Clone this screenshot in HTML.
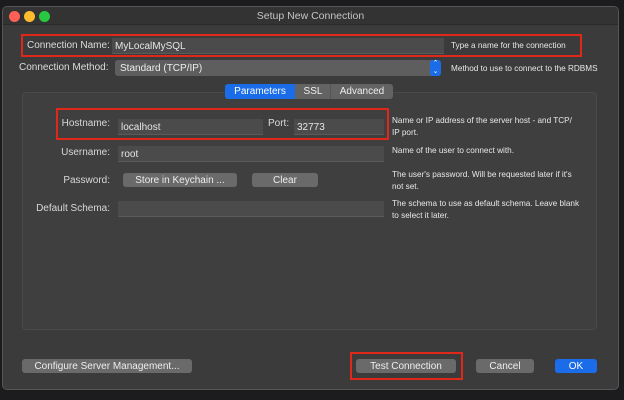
<!DOCTYPE html>
<html><head><style>
*{margin:0;padding:0;box-sizing:border-box}
body{width:624px;height:400px;background:#1c1c1e;position:relative;overflow:hidden;font-family:"Liberation Sans",sans-serif;font-size:10px;color:#dcdcdc}
.a{position:absolute;white-space:nowrap}
.win{left:2px;top:6px;width:617px;height:384px;background:#3b3b3b;border:1px solid #555;border-radius:5px;overflow:hidden}
.title{left:0;top:0;width:100%;height:18px;background:#333;border-bottom:1px solid #2a2a2a;text-align:center;line-height:18px;color:#c4c4c4;font-size:10.5px}
.dot{width:11px;height:11px;border-radius:50%;top:4px}
.inp{background:#4b4b4b;border-bottom:1px solid #5a5a5a;color:#e6e6e6;padding-left:3px;line-height:17px}
.hint{font-size:8.2px;color:#e8e8e8;line-height:12px}
.lbl{text-align:right;color:#d8d8d8}
.btn{background:#6a6a6a;border-radius:3px;text-align:center;color:#eee;line-height:15px;font-size:10px}
.red{border:2px solid #e0281a}
</style></head><body>
<div class="a win">
<div class="a title">Setup New Connection</div>
<div class="a dot" style="left:6px;background:#fe5f57"></div>
<div class="a dot" style="left:21px;background:#febc2e"></div>
<div class="a dot" style="left:36px;background:#28c840"></div>
</div>
<div class="a red" style="left:21px;top:34px;width:561px;height:23px"></div>
<div class="a" style="left:27px;top:40px">Connection Name:</div>
<div class="a inp" style="left:112px;top:38px;width:332px;height:16px">MyLocalMySQL</div>
<div class="a hint" style="left:451px;top:40px">Type a name for the connection</div>
<div class="a" style="left:19px;top:62px">Connection Method:</div>
<div class="a" style="left:115px;top:60px;width:326px;height:16px;background:#5e5e5e;border-radius:3px;padding-left:5px;line-height:17px;color:#eee">Standard (TCP/IP)</div>
<div class="a" style="left:430px;top:60px;width:11px;height:16px;background:#1a6ce8;border-radius:3px;color:#fff;font-size:7px;text-align:center;line-height:8px">⌃<br>⌄</div>
<div class="a hint" style="left:451px;top:63px">Method to use to connect to the RDBMS</div>
<div class="a" style="left:22px;top:92px;width:575px;height:238px;background:#3f3f3f;border:1px solid #4a4a4a;border-radius:4px"></div>
<div class="a" style="left:225px;top:84px;width:168px;height:15px;background:#636363;border-radius:3px"></div>
<div class="a" style="left:225px;top:84px;width:70px;height:15px;background:#1a6ce8;border-radius:3px 0 0 3px;color:#fff;text-align:center;line-height:15px">Parameters</div>
<div class="a" style="left:296px;top:84px;width:35px;height:15px;text-align:center;line-height:15px;color:#eee;border-right:1px solid #555">SSL</div>
<div class="a" style="left:331px;top:84px;width:62px;height:15px;text-align:center;line-height:15px;color:#eee">Advanced</div>
<div class="a red" style="left:56px;top:108px;width:333px;height:32px"></div>
<div class="a lbl" style="left:40px;top:118px;width:70px">Hostname:</div>
<div class="a inp" style="left:118px;top:119px;width:145px;height:16px">localhost</div>
<div class="a" style="left:268px;top:118px">Port:</div>
<div class="a inp" style="left:294px;top:119px;width:90px;height:16px">32773</div>
<div class="a hint" style="left:392px;top:115px">Name or IP address of the server host - and TCP/<br>IP port.</div>
<div class="a lbl" style="left:40px;top:147px;width:70px">Username:</div>
<div class="a inp" style="left:118px;top:146px;width:266px;height:16px">root</div>
<div class="a hint" style="left:392px;top:145px">Name of the user to connect with.</div>
<div class="a lbl" style="left:40px;top:175px;width:70px">Password:</div>
<div class="a btn" style="left:123px;top:173px;width:114px;height:14px">Store in Keychain ...</div>
<div class="a btn" style="left:252px;top:173px;width:66px;height:14px">Clear</div>
<div class="a hint" style="left:392px;top:169px">The user's password. Will be requested later if it's<br>not set.</div>
<div class="a lbl" style="left:20px;top:203px;width:90px">Default Schema:</div>
<div class="a inp" style="left:118px;top:201px;width:266px;height:16px"></div>
<div class="a hint" style="left:392px;top:198px">The schema to use as default schema. Leave blank<br>to select it later.</div>
<div class="a btn" style="left:22px;top:359px;width:170px;height:14px">Configure Server Management...</div>
<div class="a red" style="left:350px;top:352px;width:113px;height:28px"></div>
<div class="a btn" style="left:356px;top:359px;width:100px;height:14px">Test Connection</div>
<div class="a btn" style="left:476px;top:359px;width:58px;height:14px">Cancel</div>
<div class="a btn" style="left:555px;top:359px;width:42px;height:14px;background:#1a6ce8;color:#fff">OK</div>
</body></html>
